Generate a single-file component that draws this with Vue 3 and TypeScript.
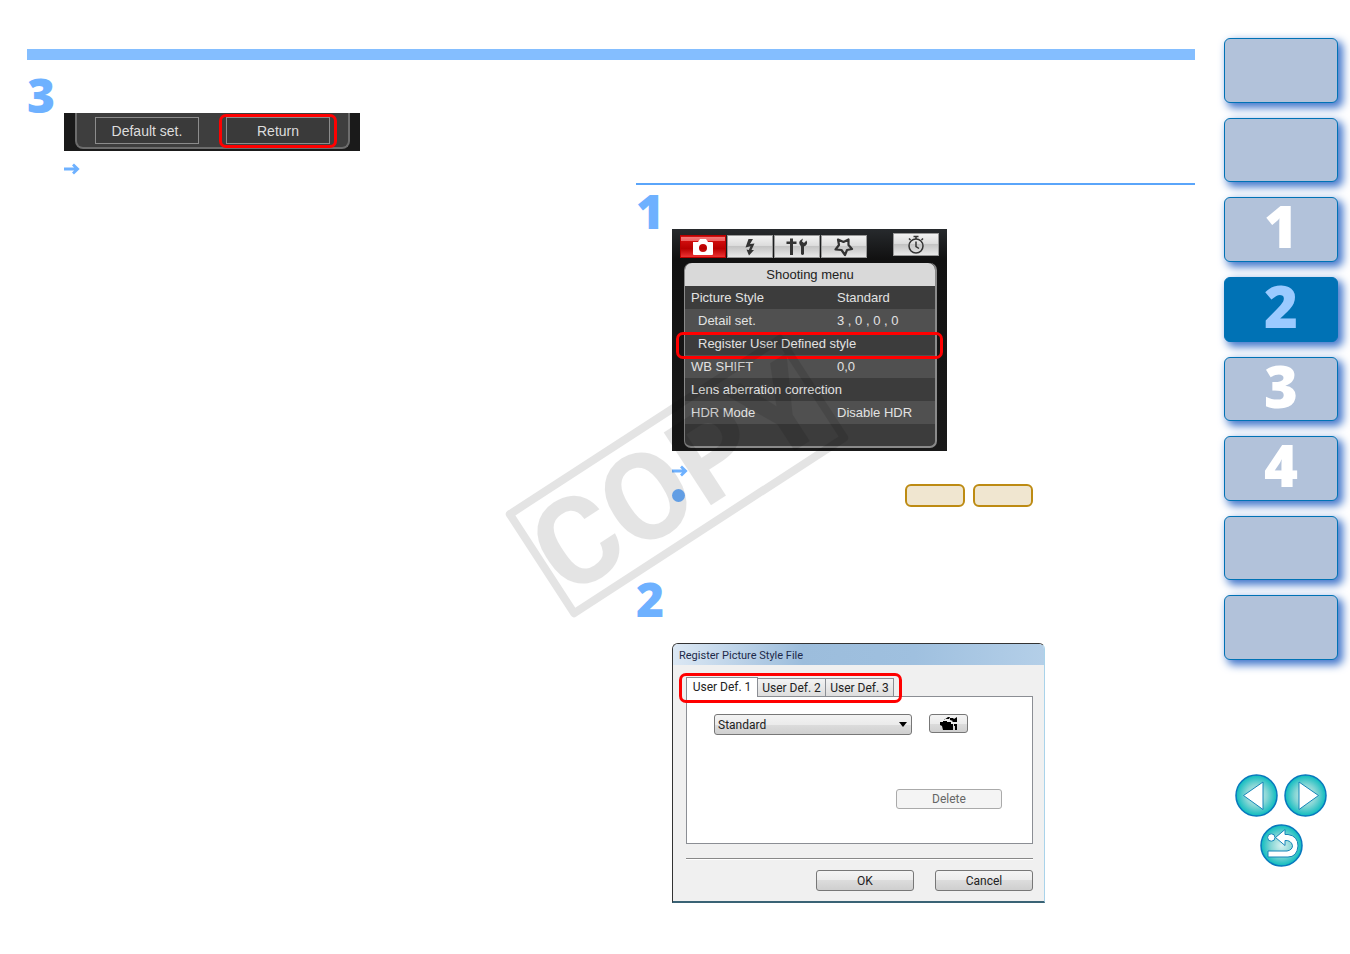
<script setup lang="ts">
import { ref } from 'vue'

interface MenuRow {
  label: string
  value?: string
  indent?: boolean
  marked?: boolean
}

const menuRows: MenuRow[] = [
  { label: 'Picture Style', value: 'Standard' },
  { label: 'Detail set.', value: '3 , 0 , 0 , 0', indent: true },
  { label: 'Register User Defined style', indent: true, marked: true },
  { label: 'WB SHIFT', value: '0,0' },
  { label: 'Lens aberration correction' },
  { label: 'HDR Mode', value: 'Disable HDR' },
]

const chapters = ['', '', '1', '2', '3', '4', '', '']
const currentChapter = '2'

const userTabs = ['User Def. 1', 'User Def. 2', 'User Def. 3']
const activeTab = ref(0)
const style = ref('Standard')
</script>

<template>
  <div class="page">
    <main class="main">
      <div class="top-bar"></div>
      <div class="columns">
        <section class="column">
          <div class="step-number first">3</div>
          <div class="step-body">
            <div class="strip">
              <div class="strip-panel">
                <button type="button" class="strip-button">Default set.</button>
                <button type="button" class="strip-button marked">Return</button>
              </div>
            </div>
            <div class="note">
              <svg class="arrow" viewBox="0 0 16 12"><path d="M0 6H13M9 1.6L13.6 6L9 10.4" /></svg>
            </div>
          </div>
        </section>

        <section class="column ruled">
          <div class="step-number">1</div>
          <div class="step-body">
            <div class="camera">
              <div class="camera-tabs">
                <button type="button" class="camera-tab selected" aria-label="Shooting">
                  <svg width="24" height="18" viewBox="0 0 24 18">
                    <path fill="#fff" fill-rule="evenodd" d="M2 4H7L9 1H15L17 4H21Q22 4 22 5V16Q22 17 21 17H3Q2 17 2 16ZM12 6A4 4 0 1 0 12 14A4 4 0 1 0 12 6Z" />
                  </svg>
                </button>
                <button type="button" class="camera-tab" aria-label="Flash">
                  <svg width="14" height="18" viewBox="0 0 14 18">
                    <path fill="#333" d="M5.500 1L10 1L7 6L11.500 5.500L8.500 12L11 12L6 17.500L3.500 11.500L5.800 12L7.500 8.200L2.500 9.500Z" />
                  </svg>
                </button>
                <button type="button" class="camera-tab" aria-label="Set-up">
                  <svg width="24" height="20" viewBox="0 0 24 20">
                    <path fill="#333" d="M5 1.500H8V4.500H11.500V7H8V18H5V7H1.500V4.500H5ZM18 1.500L17 4.500L19 6L21.500 3.500Q23.500 7.500 19 9.500V17Q17.500 19 16 17V9.500Q11.500 4.500 18 1.500Z" />
                  </svg>
                </button>
                <button type="button" class="camera-tab" aria-label="My Menu">
                  <svg width="22" height="20" viewBox="0 0 22 20">
                    <path fill="none" stroke="#333" stroke-width="2.200" stroke-linejoin="round" d="M5 2.500L10.500 5L15.500 2.500L15.500 8L19 12L14 13L12 18L8.500 13L2.500 12.500L6 8Z" />
                  </svg>
                </button>
                <button type="button" class="camera-tab timer" aria-label="Timer">
                  <svg width="20" height="20" viewBox="0 0 20 20" fill="none" stroke="#333" stroke-width="1.500">
                    <circle cx="10" cy="11" r="7" />
                    <path d="M10 4V2M7.500 1.500H12.500M10 6.500V11.500L13 13.500M4.500 5L3 3.500M15.500 5L17 3.500" />
                  </svg>
                </button>
              </div>
              <div class="camera-menu">
                <h2 class="camera-title">Shooting menu</h2>
                <table class="camera-table">
                  <colgroup>
                    <col class="label-col" />
                    <col />
                  </colgroup>
                  <tbody>
                    <tr v-for="row in menuRows" :key="row.label">
                      <th scope="row" :class="{ indent: row.indent, marked: row.marked }" :colspan="row.value ? 1 : 2">{{ row.label }}</th>
                      <td v-if="row.value">{{ row.value }}</td>
                    </tr>
                  </tbody>
                </table>
              </div>
            </div>
            <div class="note">
              <svg class="arrow" viewBox="0 0 16 12"><path d="M0 6H13M9 1.6L13.6 6L9 10.4" /></svg>
            </div>
            <div class="references">
              <span class="dot"></span>
              <a href="#" class="pill" aria-label="First related page"></a>
              <a href="#" class="pill" aria-label="Second related page"></a>
            </div>
          </div>

          <div class="step-number second">2</div>
          <div class="step-body">
            <div class="dialog">
              <div class="dialog-title">Register Picture Style File</div>
              <div class="dialog-body">
                <div class="dialog-tabs" role="tablist">
                  <button
                    v-for="(tab, i) in userTabs"
                    :key="tab"
                    type="button"
                    role="tab"
                    class="dialog-tab"
                    :class="{ active: activeTab === i }"
                    :aria-selected="activeTab === i"
                    @click="activeTab = i"
                  >{{ tab }}</button>
                </div>
                <div class="dialog-panel">
                  <div class="picker">
                    <div class="select-wrap">
                      <select v-model="style" class="select" aria-label="Picture Style">
                        <option>Standard</option>
                      </select>
                      <svg class="caret" width="8" height="5" viewBox="0 0 8 5"><path d="M0 0H8L4 5Z" /></svg>
                    </div>
                    <button type="button" class="win-button open" aria-label="Open file">
                      <svg width="20" height="14" viewBox="0 0 20 14">
                        <path d="M1 5H4V4H8V5H12V7H14V13H4L3 9L1 8ZM5 3L9 0H11L10 2H6V3ZM11 1H14L15 2L18 0V5H13L14 4L11 3ZM15 7H18V13H16V9H15Z" />
                      </svg>
                    </button>
                  </div>
                  <button type="button" class="win-button delete" disabled>Delete</button>
                </div>
                <div class="dialog-footer">
                  <button type="button" class="win-button">OK</button>
                  <button type="button" class="win-button">Cancel</button>
                </div>
              </div>
            </div>
          </div>
        </section>
      </div>
    </main>

    <aside class="side">
      <nav class="chapters" aria-label="Chapters">
        <a
          v-for="(chapter, i) in chapters"
          :key="i"
          href="#"
          class="chapter"
          :class="{ current: chapter === currentChapter }"
          :aria-label="chapter ? undefined : 'Section'"
        >{{ chapter }}</a>
      </nav>
      <div class="pager">
        <button type="button" class="round" aria-label="Previous page">
          <svg viewBox="0 0 43 43">
            <defs>
              <radialGradient id="teal" cx="50%" cy="50%" r="52%">
                <stop offset="0" stop-color="#d8f1f0" />
                <stop offset="0.5" stop-color="#86d6d5" />
                <stop offset="1" stop-color="#00b9bd" />
              </radialGradient>
            </defs>
            <circle cx="21.500" cy="21.500" r="20.500" />
            <path d="M8.500 21.500L28 8V35.500Z" />
          </svg>
        </button>
        <button type="button" class="round" aria-label="Next page">
          <svg viewBox="0 0 43 43">
            <circle cx="21.500" cy="21.500" r="20.500" />
            <path d="M34.500 21.500L15 8V35.500Z" />
          </svg>
        </button>
        <button type="button" class="round" aria-label="Return to previous view">
          <svg viewBox="0 0 43 43">
            <circle cx="21.500" cy="21.500" r="20.500" />
            <path d="M15.500 13.500L25 5.500V10.500H28Q38 12 38 22Q37 33 28 33H8V27H27Q32.500 26 32.500 21.500Q31 16 25 16.500V21.500Z" />
            <path d="M15 13.500A3.700 3.700 0 1 0 7.600 13.500A3.700 3.700 0 1 0 15 13.500Z" />
          </svg>
        </button>
      </div>
    </aside>

    <div class="watermark" aria-hidden="true">COPY</div>
  </div>
</template>

<style>
body {
  margin: 0;
  background: #fff;
}
</style>

<style scoped>
.page {
  position: relative;
  display: flex;
  min-height: 100vh;
  overflow: hidden;
  box-sizing: border-box;
  font-family: "Liberation Sans", Arial, sans-serif;
}
.page *,
.page *::after {
  box-sizing: border-box;
}
button {
  font-family: inherit;
  padding: 0;
  margin: 0;
}
.main {
  flex: 1;
  min-width: 0;
  padding: 49px 0 48px 27px;
}
.top-bar {
  height: 11px;
  background: #84beff;
}
.columns {
  display: grid;
  grid-template-columns: 1fr 1fr;
  gap: 50px;
}
.ruled {
  margin-top: 123px;
  border-top: 2px solid #5aa5fa;
}
.step-number {
  margin-top: 8px;
  height: 36px;
  font: 800 48px/36px "Open Sans", sans-serif;
  color: #6eb1ff;
}
.step-number.first {
  margin-top: 17px;
}
.step-number.second {
  margin: 74px 0 26px;
}
.step-body {
  padding-left: 36px;
}
.column:first-child .step-body {
  padding-left: 37px;
}

.strip {
  width: 296px;
  height: 38px;
  padding: 0 10px 2px 11px;
  background: #1a1a1a;
}
.strip-panel {
  display: flex;
  gap: 27px;
  height: 36px;
  padding: 4px 14px 0 18px;
  background: #3e3e3e;
  border: 2px solid #6c6c6c;
  border-top: 0;
  border-radius: 0 0 8px 8px;
}
.strip-button {
  position: relative;
  width: 104px;
  height: 27px;
  background: #3a3a3a;
  border: 1px solid #8c8c8c;
  color: #ddd;
  font-size: 14px;
}
.strip-button.marked::after {
  content: "";
  position: absolute;
  inset: -4px -8px -5px;
  border: 3px solid #f00;
  border-radius: 7px;
}

.note {
  display: flex;
  align-items: center;
  height: 20px;
  margin-top: 10px;
}
.column:first-child .note {
  margin-top: 8px;
}
.arrow {
  width: 16px;
  height: 12px;
  fill: none;
  stroke: #6eb1ff;
  stroke-width: 2.8;
}
.references {
  display: flex;
  align-items: center;
  gap: 8px;
  height: 23px;
  margin-top: 3px;
}
.dot {
  width: 13px;
  height: 13px;
  margin-right: 212px;
  border-radius: 50%;
  background: #6eb1ff;
}
.pill {
  width: 60px;
  height: 23px;
  border: 2px solid #bd8b13;
  border-radius: 6px;
  background: #f0e6d0;
}

.camera {
  width: 275px;
  height: 222px;
  padding: 4px 8px 3px 8px;
  background: linear-gradient(#272a2d, #111 30px, #191919);
}
.camera-tabs {
  display: flex;
  gap: 1px;
  align-items: flex-end;
  height: 25px;
}
.camera-tab {
  display: grid;
  place-items: center;
  width: 46px;
  height: 23px;
  border: 1px solid #999;
  background: linear-gradient(#f2f2f2, #ddd 45%, #c4c4c4 50%, #e8e8e8);
}
.camera-tab.selected {
  border-color: #b00;
  background: linear-gradient(#c11 1px, #f47a7a 1px, #f06060 5px, #d00d0d 5px, #b80000 60%, #e33);
}
.camera-tab.timer {
  align-self: flex-start;
  margin-left: auto;
}
.camera-menu {
  height: 185px;
  margin: 5px 2px 0 4px;
  border: 0 solid #8a8a8a;
  border-width: 0 2px 2px 1px;
  border-radius: 7px;
  background: #3c3c3c;
}
.camera-title {
  margin: 0;
  height: 23px;
  border-radius: 7px 7px 0 0;
  background: #d9d9d9;
  color: #222;
  font-size: 13px;
  font-weight: 400;
  line-height: 23px;
  text-align: center;
}
.camera-table {
  width: 100%;
  border-spacing: 0;
  table-layout: fixed;
  color: #e2e2e2;
  font-size: 13px;
}
.label-col {
  width: 152px;
}
.camera-table tr {
  height: 23px;
}
.camera-table tr:nth-child(even) {
  background: #505050;
}
.camera-table th,
.camera-table td {
  padding: 0;
  font-weight: 400;
  text-align: left;
  white-space: nowrap;
}
.camera-table th {
  padding-left: 6px;
}
.camera-table th.indent {
  padding-left: 13px;
}
.camera-table th.marked {
  position: relative;
  z-index: 1;
}
.camera-table th.marked::after {
  content: "";
  position: absolute;
  inset: 0 -8px -4px -9px;
  border: 3px solid #f00;
  border-radius: 7px;
}

.dialog {
  width: 373px;
  border: 1px solid #333;
  border-right-color: #a9d3ea;
  border-bottom: 2px solid #3a6375;
  border-radius: 6px 6px 0 0;
  background: #f0f0f0;
  font-family: Roboto, "Liberation Sans", sans-serif;
  color: #222;
}
.dialog-title {
  height: 21px;
  padding-left: 6px;
  border-radius: 5px 5px 0 0;
  background: linear-gradient(90deg, #dce8f4, #9cbddc 35%, #9fc0df 65%, #b4cfe8);
  font-size: 11px;
  line-height: 23px;
  color: #1d2a4a;
}
.dialog-body {
  padding: 12px 11px 10px 13px;
}
.dialog-tabs {
  position: relative;
  z-index: 1;
  display: flex;
  align-items: flex-end;
  width: 208px;
  height: 20px;
  margin-bottom: -1px;
}
.dialog-tabs::after {
  content: "";
  position: absolute;
  inset: -4px -8px -6px -7px;
  border: 3px solid #f00;
  border-radius: 7px;
  pointer-events: none;
}
.dialog-tab {
  width: 68px;
  height: 19px;
  border: 1px solid #8b8e94;
  border-left-width: 0;
  background: linear-gradient(#f3f3f3, #ddd);
  font-size: 12px;
  color: #222;
}
.dialog-tab.active {
  width: 72px;
  height: 20px;
  padding-bottom: 2px;
  border-width: 1px 1px 0;
  background: #fff;
}
.dialog-panel {
  height: 148px;
  padding: 17px 30px 0 27px;
  border: 1px solid #8b8e94;
  background: #fff;
}
.picker {
  display: flex;
  gap: 17px;
  align-items: flex-start;
}
.select-wrap {
  position: relative;
  width: 198px;
}
.select {
  appearance: none;
  display: block;
  width: 100%;
  height: 21px;
  padding: 0 3px;
  border: 1px solid #777;
  border-radius: 3px;
  background: linear-gradient(#f3f3f3, #ebebeb 50%, #dcdcdc 50%, #d0d0d0);
  font: 12px Roboto, "Liberation Sans", sans-serif;
  color: #222;
}
.caret {
  position: absolute;
  right: 5px;
  top: 8px;
  pointer-events: none;
}
.win-button {
  width: 98px;
  height: 21px;
  border: 1px solid #777;
  border-radius: 3px;
  background: linear-gradient(#f4f4f4, #ebebeb 50%, #dcdcdc 50%, #cfcfcf);
  font: 12px Roboto, "Liberation Sans", sans-serif;
  color: #222;
}
.win-button.open {
  display: grid;
  place-items: center;
  width: 39px;
  height: 19px;
}
.win-button.delete {
  display: block;
  width: 106px;
  height: 20px;
  margin: 54px 0 0 auto;
  border-color: #aaa;
  background: #f4f4f4;
  color: #666;
}
.dialog-footer {
  display: flex;
  justify-content: flex-end;
  gap: 21px;
  margin-top: 14px;
  padding-top: 11px;
  border-top: 1px solid #888;
  box-shadow: inset 0 1px #fff;
}

.side {
  width: 155px;
  padding: 38px 12px 0 29px;
  box-sizing: border-box;
}
.chapters {
  display: grid;
  grid-template-rows: repeat(8, minmax(0, 1fr));
  gap: 15px;
  height: 622px;
}
.chapter {
  display: grid;
  place-items: center;
  padding-bottom: 7px;
  border: 1px solid #0072b5;
  border-radius: 6px;
  background: #b2c2da;
  box-shadow: 4px 4px 9px 1px #4478cc;
  color: #fff;
  font: 800 58px/56px "Open Sans", sans-serif;
  text-decoration: none;
}
.chapter.current {
  background: #0072b5;
  color: #9bcaff;
}
.pager {
  display: flex;
  flex-wrap: wrap;
  justify-content: center;
  gap: 7px 6px;
  margin-top: 114px;
}
.round {
  width: 43px;
  height: 43px;
  border: 0;
  background: none;
}
.round svg {
  display: block;
  width: 43px;
  height: 43px;
}
.round circle {
  fill: url(#teal);
  stroke: #0878bd;
  stroke-width: 1.5;
}
.round path {
  fill: #fff;
  stroke: #1585b8;
  stroke-width: 1;
}

.watermark {
  position: absolute;
  left: 512px;
  top: 413px;
  width: 330px;
  height: 126px;
  border: 8px solid #000;
  border-radius: 4px;
  opacity: 0.1;
  transform: rotate(-33deg);
  font: 700 122px/114px Roboto, "Liberation Sans", sans-serif;
  display: flex;
  justify-content: center;
  color: #000;
  pointer-events: none;
  z-index: 2;
}
</style>
